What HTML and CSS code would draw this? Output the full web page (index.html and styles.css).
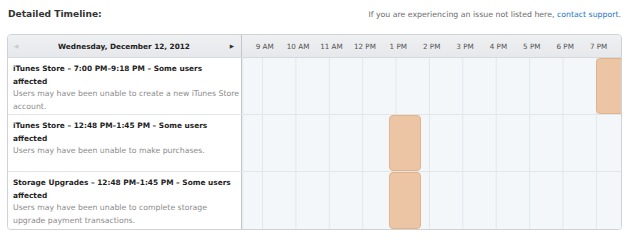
FILE: index.html
```html
<!DOCTYPE html>
<html>
<head>
<meta charset="utf-8">
<link rel="stylesheet" href="styles.css">
</head>
<body>
<div class="page">
  <div class="top">
    <h2 class="heading">Detailed Timeline:</h2>
    <p class="note">If you are experiencing an issue not listed here, <a class="link" href="#">contact support</a>.</p>
  </div>
  <div class="timeline">
    <div class="head">
      <div class="head-date">
        <span class="arrow prev">&#9664;</span>
        <span class="date">Wednesday, December 12, 2012</span>
        <span class="arrow next">&#9654;</span>
      </div>
      <div class="hours">
        <span class="hour">9 AM</span>
        <span class="hour">10 AM</span>
        <span class="hour">11 AM</span>
        <span class="hour">12 PM</span>
        <span class="hour">1 PM</span>
        <span class="hour">2 PM</span>
        <span class="hour">3 PM</span>
        <span class="hour">4 PM</span>
        <span class="hour">5 PM</span>
        <span class="hour">6 PM</span>
        <span class="hour">7 PM</span>
      </div>
    </div>
    <div class="row">
      <div class="info">
        <div class="event">iTunes Store – 7:00 PM–9:18 PM – Some users affected</div>
        <div class="desc">Users may have been unable to create a new iTunes Store account.</div>
      </div>
      <div class="track"><div class="bar" style="left:354px;width:77px"></div></div>
    </div>
    <div class="row">
      <div class="info">
        <div class="event">iTunes Store – 12:48 PM–1:45 PM – Some users affected</div>
        <div class="desc">Users may have been unable to make purchases.</div>
      </div>
      <div class="track"><div class="bar" style="left:147px;width:32px"></div></div>
    </div>
    <div class="row last">
      <div class="info">
        <div class="event">Storage Upgrades – 12:48 PM–1:45 PM – Some users affected</div>
        <div class="desc">Users may have been unable to complete storage upgrade payment transactions.</div>
      </div>
      <div class="track"><div class="bar" style="left:147px;width:32px"></div></div>
    </div>
  </div>
</div>
</body>
</html>
```
FILE: styles.css
```css
html, body {
  margin: 0;
  padding: 0;
  background: #ffffff;
}
body {
  font-family: "DejaVu Sans", "Liberation Sans", sans-serif;
  color: #333;
}
.page {
  width: 634px;
  padding: 0 0 0 7px;
  box-sizing: border-box;
}
.top {
  height: 34px;
  display: flex;
  justify-content: space-between;
  align-items: flex-start;
  padding-right: 13px;
}
.heading {
  margin: 8px 0 0 1px;
  font-size: 9.1px;
  font-weight: bold;
  color: #333;
  line-height: 12px;
}
.note {
  margin: 9px 0 0 0;
  font-size: 7.8px;
  color: #6b6b6b;
  line-height: 11px;
}
.link {
  color: #1a75c8;
  text-decoration: none;
}
.timeline {
  width: 615px;
  box-sizing: border-box;
  border: 1px solid #cfd3d7;
  border-radius: 4px;
  overflow: hidden;
  box-shadow: 0 1px 1px rgba(0,0,0,0.06);
}
.head {
  display: flex;
  height: 23px;
  box-sizing: border-box;
  border-bottom: 1px solid #d7dadd;
  background: linear-gradient(#eef0f2, #e6e8eb);
}
.head-date {
  width: 234px;
  box-sizing: border-box;
  border-right: 1px solid #c3c7cb;
  display: flex;
  align-items: center;
  justify-content: space-between;
  padding: 0 7px 0 6px;
}
.arrow {
  font-size: 5.5px;
  line-height: 8px;
}
.prev { color: #c8cacc; }
.next { color: #333; }
.date {
  font-size: 7.3px;
  font-weight: bold;
  color: #222;
}
.hours {
  flex: 1;
  display: flex;
  align-items: center;
  padding-left: 6px;
}
.hour {
  width: 33.4px;
  flex: none;
  text-align: center;
  font-size: 7.2px;
  color: #555;
}
.row {
  display: flex;
  height: 57px;
  box-sizing: border-box;
  border-bottom: 1px solid #e3e6e9;
}
.row.last {
  border-bottom: none;
}
.info {
  width: 234px;
  box-sizing: border-box;
  border-right: 1px solid #c3c7cb;
  padding: 4px 2px 0 5px;
  background: #fff;
}
.event {
  font-size: 7.4px;
  font-weight: bold;
  color: #1e1e1e;
  line-height: 13px;
  padding-right: 4px;
}
.desc {
  font-size: 7.75px;
  color: #8c8c8c;
  line-height: 12.5px;
}
.track {
  flex: 1;
  position: relative;
  background-color: #f3f7fa;
  background-image: linear-gradient(to right, #e2e7eb 1px, transparent 1px);
  background-size: 33.4px 100%;
  background-position: 20px 0;
  box-shadow: inset 2px 0 2px -1px rgba(0,0,0,0.06);
}
.bar {
  position: absolute;
  top: 0;
  bottom: 0;
  box-sizing: border-box;
  background: #ecc6a4;
  border: 1px solid #e2b38b;
  border-radius: 4px;
}
```
